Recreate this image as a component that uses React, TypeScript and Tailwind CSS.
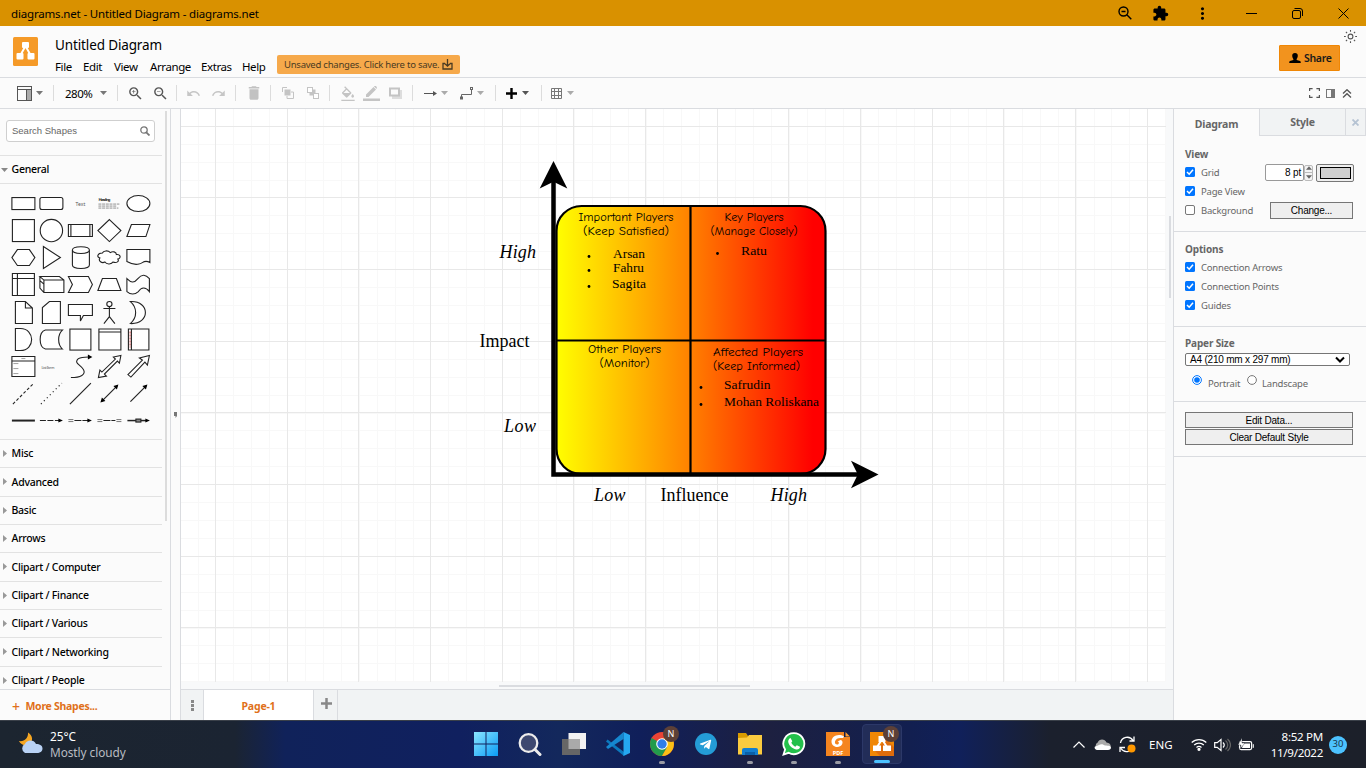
import React from "react";
import {
  MdExtension, MdMoreVert, MdZoomOut, MdZoomIn, MdUndo, MdRedo, MdDelete,
  MdFormatColorFill,
} from "react-icons/md";
import { FaTelegramPlane } from "react-icons/fa";

const Caret = ({ className = "text-[#777]" }: { className?: string }) => (
  <svg width="7" height="4" viewBox="0 0 7 4" className={className}>
    <path d="M0 0h7L3.5 4z" fill="currentColor" />
  </svg>
);

function TitleBar() {
  return (
    <div className="flex h-[26px] shrink-0 items-center bg-[#d99100] pl-[11px] text-black">
      <span className="w-[1107px] pt-px text-[11.5px] tracking-[-0.17px] leading-none">diagrams.net - Untitled Diagram - diagrams.net</span>
      <svg width="14" height="14" viewBox="0 0 14 14" fill="none" stroke="#000" strokeWidth="1.4">
        <circle cx="5.500" cy="5.500" r="4.500" /><path d="M3.500 5.500h4M8.800 8.800l4.500 4.500" />
      </svg>
      <MdExtension size={17} className="ml-[20px]" />
      <MdMoreVert size={19} className="ml-[24px]" />
      <svg width="11" height="11" viewBox="0 0 11 11" className="ml-[34px]"><path d="M0 5.5h11" stroke="#000" /></svg>
      <svg width="11" height="11" viewBox="0 0 11 11" fill="none" stroke="#000" className="ml-[35px]">
        <rect x=".5" y="2.5" width="8" height="8" rx="1.5" /><path d="M2.5.5h5.500a2.500 2.500 0 0 1 2.500 2.500v5" />
      </svg>
      <svg width="11" height="11" viewBox="0 0 11 11" stroke="#000" className="ml-[35px]"><path d="M.5.5l10 10M10.500.5l-10 10" /></svg>
    </div>
  );
}

function DrawioMark({ className }: { className: string }) {
  return (
    <svg viewBox="0 0 25 29" className={className}>
      <rect width="25" height="29" rx="1.500" fill="#f59a28" />
      <path d="M12.500 9L7.500 18M12.500 9l5 9" stroke="#fff" strokeWidth="2" />
      <rect x="9" y="5" width="7" height="6" rx="1" fill="#fff" />
      <rect x="3.500" y="16" width="7" height="6.500" rx="1" fill="#fff" />
      <rect x="14.500" y="16" width="7" height="6.500" rx="1" fill="#fff" />
    </svg>
  );
}

function Header() {
  return (
    <div className="flex h-[52px] shrink-0 border-b border-[#dadce0] bg-[#fbfbfb] pl-[13px]">
      <DrawioMark className="mt-[11px] h-[29px] w-[25px]" />
      <div className="ml-[17px] w-[222px] pt-[10px]">
        <div className="h-[18px] text-[13.5px] leading-[19px] tracking-[-0.13px] text-black">Untitled Diagram</div>
        <div className="flex pt-[4px] text-[11.5px] leading-[17px] tracking-[-0.4px] text-black">
          <span className="w-[28px]">File</span><span className="w-[31px]">Edit</span>
          <span className="w-[36px]">View</span><span className="w-[51px]">Arrange</span>
          <span className="w-[41px]">Extras</span><span>Help</span>
        </div>
      </div>
      <div className="mt-[29px] flex h-[19px] w-[183px] items-center rounded-[2px] bg-[#f6a94b] pl-[7px] text-[9.5px] tracking-[-0.23px] text-[#4a3a22]">
        <span className="w-[158px] whitespace-nowrap pt-[2px]">Unsaved changes. Click here to save.</span>
        <svg width="11" height="11" viewBox="0 0 11 11" fill="none" stroke="#4a3a22" strokeWidth="1.300">
          <path d="M3 4.500H1v5.500h9V4.500H8M5.500 0v7M3 4.800l2.500 2.400L8 4.800" />
        </svg>
      </div>
      <div className="ml-auto mt-[19px] flex h-[26px] w-[61px] items-center rounded-[1px] border border-[#f08705] bg-[#f2931e] pl-[9px] pt-[2px] text-[10.5px] tracking-[-0.3px] font-semibold text-[#1a1a1a]">
        <svg width="12" height="11" viewBox="0 0 13 12" className="mr-[3px] mt-[-1px]">
          <path d="M6.500 0a3 3 0 0 1 3 3.300c0 1.500-.8 2.800-1.200 3.200v1l3.700 1.300c.6.3.8 1 .8 2.200H.2c0-1.200.2-1.900.8-2.200l3.700-1.300v-1C4.300 6.100 3.500 4.800 3.500 3.300A3 3 0 0 1 6.500 0z" fill="#000" />
        </svg>
        Share
      </div>
      <div className="w-[26px] pl-[4px] pt-[4px]">
        <svg width="13" height="13" viewBox="0 0 13 13" fill="none" stroke="#555" strokeWidth="1.100">
          <circle cx="6.500" cy="6.500" r="2.400" />
          <path d="M6.500 0v1.800M6.500 11.200V13M0 6.500h1.800M11.200 6.500H13M1.900 1.900l1.200 1.200M9.900 9.900l1.200 1.200M1.900 11.100l1.200-1.200M9.900 3.100l1.200-1.200" />
        </svg>
      </div>
    </div>
  );
}

const Sep = () => <div className="h-[16px] w-px shrink-0 bg-[#dcdcdc]" />;

function Toolbar() {
  return (
    <div className="flex h-[31px] shrink-0 items-center border-b border-[#dadce0] bg-[#fbfbfb] text-[#555]">
      <div className="flex w-[53px] items-center gap-[4px] pl-[17px]">
        <svg width="15" height="15" viewBox="0 0 15 15" fill="none" stroke="#555"><rect x=".5" y=".5" width="14" height="14" /><path d="M.5 3.500h14M9.500 3.500v11" /><path d="M10 4h4v10h-4z" fill="#aaa" stroke="none" /></svg>
        <Caret />
      </div>
      <Sep />
      <div className="flex w-[63px] items-center pl-[11px] text-[11.5px] tracking-[-0.5px] text-black"><span className="w-[35px] pt-[2px]">280%</span><Caret /></div>
      <Sep />
      <div className="flex w-[58px] items-center gap-[8px] pl-[9px]"><MdZoomIn size={17} /><MdZoomOut size={17} /></div>
      <Sep />
      <div className="flex w-[58px] items-center gap-[10px] pl-[9px] text-[#c6c6c6]"><MdUndo size={15} /><MdRedo size={15} /></div>
      <Sep />
      <div className="flex w-[34px] justify-center pl-px text-[#c2c2c2]"><MdDelete size={18} /></div>
      <Sep />
      <div className="flex w-[58px] items-center gap-[13px] pl-[11px]">
        <svg width="12" height="12" viewBox="0 0 12 12"><path d="M.5 5V.5H5M7 11.500h4.500V7M5 9v2.500h2M9 5h2.500v2" fill="none" stroke="#c4c4c4" /><rect x="2.500" y="2.500" width="6" height="6" fill="#c4c4c4" /></svg>
        <svg width="12" height="12" viewBox="0 0 12 12" fill="#fff" stroke="#c4c4c4"><rect x="3" y="3" width="5" height="5" fill="#c4c4c4" /><rect x=".5" y=".5" width="5" height="5" /><rect x="6.500" y="6.500" width="5" height="5" /></svg>
      </div>
      <Sep />
      <div className="flex w-[82px] items-center pl-[10px] text-[#c4c4c4]">
        <MdFormatColorFill size={16} viewBox="0 0 24 20" />
        <svg width="17" height="15" viewBox="0 0 17 15" className="ml-[7px]" fill="#c4c4c4"><path d="M0 12.500h17V15H0zM3 11V8.500L10.500 1 13 3.500 5.500 11z" /><path d="M11 .5l.5-.5H13l1 1.500-.5 1.500z" /></svg>
        <svg width="13" height="12" viewBox="0 0 13 12" className="ml-[9px]"><path d="M3 3h10v9H3z" fill="#ddd" /><rect x="1" y="1.500" width="9" height="7" fill="#fbfbfb" stroke="#c4c4c4" strokeWidth="2" /></svg>
      </div>
      <Sep />
      <div className="flex w-[82px] items-center pl-[11px]">
        <svg width="13" height="8" viewBox="0 0 13 8"><path d="M0 4.500h12" stroke="#555" /><path d="M9 2L13 4.500 9 7z" fill="#555" /></svg>
        <Caret className="ml-[4px] text-[#aaa]" />
        <svg width="14" height="13" viewBox="0 0 14 13" fill="none" stroke="#666" className="ml-[12px]"><path d="M1.500 10V7.500h10V3" /><rect x=".5" y="10" width="2" height="2" /><rect x="10.500" y=".5" width="2" height="2" /></svg>
        <Caret className="ml-[3px] text-[#aaa]" />
      </div>
      <Sep />
      <div className="flex w-[45px] items-center gap-[5px] pl-[10px]">
        <svg width="11" height="11" viewBox="0 0 11 11"><path d="M5.500 0v11M0 5.500h11" stroke="#000" strokeWidth="2.400" /></svg><Caret className="text-[#555]" />
      </div>
      <Sep />
      <div className="flex items-center gap-[5px] pl-[8px]">
        <svg width="12" height="11" viewBox="0 0 12 11" fill="none" stroke="#777"><path d="M1.500.5h10v10h-10zM4.500.5v10M8.500.5v10M1.500 3.500h10M1.500 7.500h10" /></svg>
        <Caret className="text-[#aaa]" />
      </div>
      <div className="ml-auto flex items-center pr-[14px]">
        <svg width="11" height="10" viewBox="0 0 11 10" fill="none" stroke="#555" strokeWidth="1.200"><path d="M.6 3V.6h3M7.400.6h3V3M10.400 7v2.400h-3M3.600 9.400h-3V7" /></svg>
        <svg width="9" height="9" viewBox="0 0 9 9" className="ml-[6px]"><rect x=".5" y=".5" width="8" height="8" fill="none" stroke="#777" /><path d="M5 1h3v7H5z" fill="#777" /></svg>
        <svg width="10" height="9" viewBox="0 0 10 9" className="ml-[7px]" fill="none" stroke="#555" strokeWidth="1.300"><path d="M1 4.500l4-3.800 4 3.800M1 8.500l4-3.800 4 3.800" /></svg>
      </div>
    </div>
  );
}

const shapes: React.ReactNode[] = [
  <rect x="-11.500" y="-6" width="23" height="12" />,
  <rect x="-11.500" y="-6" width="23" height="12" rx="2" />,
  <text x="0" y="2" fontSize="5" textAnchor="middle" stroke="none" fill="#555">Text</text>,
  <g stroke="none" fill="#333"><text x="-11" y="-2.500" fontSize="4.200" fontWeight="700" textLength="12">Heading</text><g stroke="#777" strokeWidth=".8"><path d="M-11 .5H10M-11 2.500H7M-11 4.500H9" strokeDasharray="3 .7" /></g></g>,
  <ellipse rx="11.500" ry="8" />,
  <rect x="-11" y="-11" width="22" height="22" />,
  <circle r="11.200" />,
  <path d="M-12-6h24V6h-24zM-9.500-6V6M9.500-6V6" />,
  <path d="M0-11L11.500 0 0 11-11.500 0z" />,
  <path d="M-7-6h18.500L7.500 6h-19z" />,
  <path d="M-6-8H6l5.500 8L6 8H-6l-5.500-8z" />,
  <path d="M-8-11L9 0-8 11z" />,
  <path d="M-8-7.500v15c0 4.500 17 4.500 17 0v-15c0-4.500-17-4.500-17 0s17 4.500 17 0" />,
  <path d="M-7-4.500c-5 0-6 4-2.500 5-2 3 2 5.500 5 4 2 3 7 2 8 0 4 1.500 6.500-1 5-3 4-1.500 2-5-1.500-4.500 0-3-4-3.500-6-2-2.500-2.500-7-2-8 .5z" />,
  <path d="M-11.500-8h23V5c-6-3.500-7 1-11 1.500C-4 7.500-8 6-11.500 4z" />,
  <path d="M-11-11h22v22h-22zM-6-11v22M-11-6h22" />,
  <path d="M-11.500-4.500v8L-7.500 8h20V-4.500L8-8h-19.500L-7.500-4.500h20M-11.500-8v4l4 3.500M-7.500-4.500V8" />,
  <path d="M-12-8H8l4 8-4 8h-20l4-8z" />,
  <path d="M-7-6H7l4.500 12h-23z" />,
  <path d="M-11.500-6c4 4 7 5 11 0s8-4 11.500 0V7C7 2 3 2.500 0 7-4 10.500-8 10-11.500 7z" />,
  <path d="M-8-11H2l7 6.500V11H-8zM2-11v6.500h7" />,
  <path d="M-2-11H9v22H-9V-5z" />,
  <path d="M-12-8h24V3H3L0 8.500V3h-12z" />,
  <g><circle cy="-8.500" r="2.600" /><path d="M0-6v10M-6-4H6M0 4l-5.500 7M0 4l5.500 7" /></g>,
  <path d="M-8-11c20-1 20 23 0 22 7-6 7-16 0-22z" />,
  <path d="M-8-11h5c15 0 15 22 0 22h-5z" />,
  <path d="M-6-9.500h17C6-5 6 5 11 9.500H-6c-7-2-7-17 0-19z" />,
  <rect x="-10.500" y="-10.500" width="21" height="21" />,
  <path d="M-10.500-10.500h22v21h-22zM-10.500-7.500h22" />,
  <g><path d="M-10-10.500h20.500v21H-10zM-7-10.500v21" /><path d="M-8.300-8V8" stroke="#c55" strokeDasharray="2 1" /></g>,
  <g><path d="M-11.500-10h23v20h-23zM-11.500-5.500h23" /><path d="M-2-8h4M-10-3h5M-10 2h5M-10 7h5" strokeWidth=".7" stroke="#777" /></g>,
  <text x="-10" y="2" fontSize="4" textLength="13" stroke="none" fill="#555">List Item</text>,
  <g><path d="M-9.500 11C0 11 6 8 3 3S-6-3-3-7c2-2.500 5-2 11-2.500" /><path d="M7.500-12l4.500 2.500-4.500 2.500z" fill="#000" stroke="none" /></g>,
  <path d="M-11 11l1.500-7.500 2 2L6-7.500l-2-2 7.500-1.500L10-3.500l-2-2L-5 7.500l2 2z" />,
  <path d="M-10.500 8L4-6.500l-3-2L11-11 9-1.500 6.500-4.500-7.500 10.500z" />,
  <path d="M-10.500 10.500l21-21" strokeDasharray="3 2" />,
  <path d="M-10.500 10.500l21-21" strokeDasharray="1.200 3" />,
  <path d="M-10.500 10.500l21-21" />,
  <g><path d="M-8 8L8-8" /><path d="M-9 9l1.500-5 3.500 3.500zM9-9L7.500-4 4-7.500z" fill="#000" stroke="none" /></g>,
  <g><path d="M-8 8L8-8" /><path d="M9-9L7.500-4 4-7.500z" fill="#000" stroke="none" /></g>,
  <path d="M-11.500 0h23" strokeWidth="2" />,
  <g><path d="M-11.500 0H8" strokeDasharray="6 1.500" /><path d="M7-2l4.500 2L7 2z" fill="#000" stroke="none" /></g>,
  <g><path d="M-6 0H8" strokeDasharray="7 1" /><path d="M-12-1h5M-12 1h5" strokeWidth=".6" /><path d="M7-2l4.500 2L7 2z" fill="#000" stroke="none" /></g>,
  <g><path d="M-6 0H6" strokeDasharray="7 1" /><path d="M-12-1h5M-12 1h5M7-1h5M7 1h5" strokeWidth=".6" /></g>,
  <g><path d="M-11 0H8" strokeWidth="1.500" /><rect x="-2.500" y="-1.500" width="5" height="3" fill="#888" /><path d="M7-2l4.500 2L7 2z" fill="#000" stroke="none" /></g>,
];

const palettes = ["Misc", "Advanced", "Basic", "Arrows", "Clipart / Computer", "Clipart / Finance", "Clipart / Various", "Clipart / Networking", "Clipart / People"];

function Sidebar() {
  return (
    <div className="flex w-[171px] shrink-0 flex-col border-r border-[#dadce0] bg-[#fbfbfb]">
      <div className="flex min-h-0 flex-1 overflow-hidden">
        <div className="w-[162px]">
          <div className="h-[47px] border-b border-[#e2e2e2] pl-[6px] pt-[11px]">
            <div className="flex h-[22px] w-[149px] items-center justify-between rounded-[3px] border border-[#cfcfcf] bg-white pl-[5px] pr-[4px] font-['Liberation_Sans'] text-[9.5px] text-[#666]">
              <span>Search Shapes</span>
              <svg width="10" height="10" viewBox="0 0 10 10" fill="none" stroke="#777" strokeWidth="1.300"><circle cx="4" cy="4" r="3.200" /><path d="M6.300 6.300L9.500 9.500" strokeWidth="1.800" /></svg>
            </div>
          </div>
          <div className="flex h-[28px] items-center border-b border-[#e2e2e2] pl-[1px] text-[10.5px] tracking-[-0.25px] font-medium text-black">
            <Caret className="mr-[3.5px] text-[#888]" /><span className="pt-px">General</span>
          </div>
          <div className="grid h-[256px] grid-cols-[repeat(5,28.8px)] auto-rows-[27.15px] border-b border-[#e2e2e2] pl-[8.5px] pt-[6px]">
            {shapes.map((s, i) => (
              <svg key={i} width="28.8" height="27.15" viewBox="-14.400 -13.570 28.800 27.150" fill="#fff" stroke="#222" strokeWidth="1.100" className="overflow-visible">{s}</svg>
            ))}
          </div>
          {palettes.map((p) => (
            <div key={p} className="flex h-[28.33px] items-center border-b border-[#e2e2e2] pl-[3px] text-[10.5px] tracking-[-0.25px] font-medium text-black">
              <svg width="4" height="7" viewBox="0 0 4 7" className="mr-[4.5px]"><path d="M0 0l4 3.500L0 7z" fill="#999" /></svg>
              <span className="pt-px">{p}</span>
            </div>
          ))}
        </div>
        <div className="ml-[3px] mt-[2px] h-[410px] w-[2px] bg-[#dcdcdc]" />
      </div>
      <div className="flex h-[31px] items-center border-t border-[#dadce0] pl-[12px] pt-[3px] text-[10.5px] font-bold tracking-[-0.28px] text-[#e0701a]">
        <span className="w-[13.5px] text-[14px] font-medium leading-none">+</span><span>More Shapes...</span>
      </div>
    </div>
  );
}

const steps = (start: number, step: number, end: number) =>
  Array.from({ length: Math.ceil((end - start) / step) }, (_, i) => Math.round(start + i * step) + 0.5);

const hand = "'Comic Neue','Comic Sans MS','Noto Sans',sans-serif";

function Diagram() {
  const label = (x: number, y: number, t: string, w: number) => (
    <text key={t + x + y} x={x} y={y} textAnchor="middle" textLength={w} lengthAdjust="spacingAndGlyphs" fontSize="11" fontFamily={hand}>{t}</text>
  );
  const item = (bx: number, x: number, y: number, t: string, w: number) => (
    <g key={t}><circle cx={bx} cy={y - 1.5} r="1.400" /><text x={x} y={y} textLength={w} lengthAdjust="spacingAndGlyphs" fontSize="13.400" fontFamily="Liberation Serif, serif">{t}</text></g>
  );
  const axis = (x: number, y: number, t: string, w: number, italic = false) => (
    <text key={t + x} x={x} y={y} textLength={w} fontSize="18" fontStyle={italic ? "italic" : "normal"} fontFamily="Liberation Serif, serif">{t}</text>
  );
  return (
    <svg width="985" height="574" viewBox="181 109 985 574" className="block bg-white">
      <g stroke="#f8f8f8">
        {steps(197.500, 17.920, 1166).map((x) => <path key={x} d={`M${x} 109v574`} />)}
        {steps(125.800, 17.920, 683).map((y) => <path key={y} d={`M181 ${y}h985`} />)}
      </g>
      <g stroke="#e8e8e8">
        {steps(215, 71.680, 1166).map((x) => <path key={x} d={`M${x} 109v574`} />)}
        {steps(125.500, 71.680, 683).map((y) => <path key={y} d={`M181 ${y}h985`} />)}
      </g>
      <defs>
        <linearGradient id="heat"><stop offset="0" stopColor="#ff0" /><stop offset="1" stopColor="#ff8000" /></linearGradient>
        <linearGradient id="hot"><stop offset="0" stopColor="#ff8000" /><stop offset=".9" stopColor="#f00" /></linearGradient>
        <clipPath id="card"><rect x="556" y="206" width="270" height="268" rx="25" /></clipPath>
      </defs>
      <g clipPath="url(#card)"><rect x="556" y="206" width="135" height="268" fill="url(#heat)" /><rect x="690.500" y="206" width="136" height="268" fill="url(#hot)" /></g>
      <rect x="556.500" y="206" width="269" height="268" rx="25" fill="none" stroke="#000" strokeWidth="2.200" />
      <path d="M690.500 206v268M556 340.500h270" stroke="#000" strokeWidth="2.200" />
      <path d="M553.500 180v294.500H860" fill="none" stroke="#000" strokeWidth="4.500" />
      <path d="M553.500 161l13.800 27.500-13.800-6.800-13.800 6.800zM878.500 474.500l-27.500 13.800 6.800-13.800-6.800-13.800z" />
      {label(626, 221, "Important Players", 95)}{label(626, 235, "(Keep Satisfied)", 86)}
      {label(754, 221, "Key Players", 59)}{label(754, 235, "(Manage Closely)", 87)}
      {label(624.500, 353, "Other Players", 73)}{label(624.500, 367, "(Monitor)", 50)}
      {label(758, 356, "Affected Players", 90)}{label(756.500, 370, "(Keep Informed)", 87)}
      {item(589, 613, 258, "Arsan", 32)}{item(589, 613, 272, "Fahru", 31)}{item(589, 612, 288, "Sagita", 34)}
      {item(717.500, 741, 255, "Ratu", 26)}
      {item(701, 724, 389, "Safrudin", 46.500)}{item(701, 724, 406, "Mohan Roliskana", 95)}
      {axis(499.500, 258, "High", 36.500, true)}{axis(479.500, 347, "Impact", 50)}{axis(504, 432, "Low", 32, true)}
      {axis(594, 501, "Low", 31.500, true)}{axis(660.500, 501, "Influence", 68)}{axis(770.500, 501, "High", 36.500, true)}
    </svg>
  );
}

function Canvas() {
  return (
    <div className="flex min-w-0 flex-1 flex-col border-l border-[#dadce0] bg-[#f8f9fa]">
      <div className="flex h-[573px] overflow-hidden">
        <Diagram />
        <div className="ml-[3px] mt-[107px] h-[82px] w-[2px] bg-[#dadce0]" />
      </div>
      <div className="h-[7px] pl-[318px] pt-[3px]"><div className="h-[2px] w-[251px] bg-[#dadce0]" /></div>
      <div className="flex h-[31px] border-t border-[#dadce0] bg-[#f1f3f4]">
        <div className="flex w-[23px] items-center justify-center border-r border-[#dadce0]">
          <svg width="3" height="11" fill="#888"><path d="M0 0h3v3H0zM0 4h3v3H0zM0 8h3v3H0z" /></svg>
        </div>
        <div className="flex w-[110px] items-center justify-center border-r border-[#dadce0] bg-white pt-[3px] text-[10.5px] tracking-[-0.2px] font-bold text-[#e0701a]">Page-1</div>
        <div className="flex w-[24px] justify-center border-r border-[#dadce0] pl-[2px] pt-[8px]">
          <svg width="11" height="11"><path d="M5.500 0v11M0 5.500h11" stroke="#888" strokeWidth="2.500" /></svg>
        </div>
      </div>
    </div>
  );
}

const Check = ({ on = true }: { on?: boolean }) => (
  <svg width="10" height="10" viewBox="0 0 10 10" className="mr-[6px] mt-[-2px]">
    {on ? <><rect width="10" height="10" rx="1.500" fill="#0075ff" /><path d="M2 5l2.200 2.200L8 2.800" fill="none" stroke="#fff" strokeWidth="1.500" /></> : <rect x=".5" y=".5" width="9" height="9" rx="1.500" fill="#fff" stroke="#777" />}
  </svg>
);
const Row = ({ on, children }: { on?: boolean; children: React.ReactNode }) => (
  <div className="flex h-[19px] items-center"><Check on={on} /><span className="pt-[2px]">{children}</span></div>
);
const Heading = ({ children }: { children: React.ReactNode }) => <div className="h-[19px] text-[10px] tracking-[-0.15px] font-bold leading-[21px]">{children}</div>;
const PlainButton = ({ className, children }: { className: string; children: React.ReactNode }) => (
  <div className={`flex items-center justify-center border border-[#767676] bg-[#efefef] pt-px font-['Liberation_Sans'] text-[10px] leading-none tracking-[-0.22px] text-black ${className}`}>{children}</div>
);

function FormatPanel() {
  return (
    <div className="w-[193px] shrink-0 border-l border-[#dadce0] bg-[#fbfbfb] text-[9.5px] tracking-[-0.2px] text-[#666]">
      <div className="flex h-[27px] text-[10.5px] font-bold">
        <div className="flex w-[85px] items-center justify-center pt-[4px]">Diagram</div>
        <div className="flex w-[86px] items-center justify-center border-b border-l border-[#dadce0] bg-[#f1f3f4] pt-px">Style</div>
        <div className="flex flex-1 items-center border-b border-l border-r border-[#dadce0] bg-[#f1f3f4] pl-[6px]">
          <svg width="7" height="7"><path d="M.5.5l6 6M6.500.5l-6 6" stroke="#b5c3d3" strokeWidth="1.800" /></svg>
        </div>
      </div>
      <div className="h-[96px] border-b border-[#dadce0] pl-[11px] pt-[8px]">
        <Heading>View</Heading>
        <div className="flex h-[19px] items-center">
          <Check /><span className="w-[64px] pt-[2px]">Grid</span>
          <div className="flex h-[17px] w-[39px] items-center justify-end rounded-[2px] border border-[#999] bg-white pr-[2px] font-['Liberation_Sans'] text-[10px] text-black">8 pt</div>
          <div className="flex h-[16px] w-[9px] flex-col items-center justify-around rounded-[2px] border border-[#bbb] bg-[#f4f4f4] px-[1px]">
            <Caret className="w-[6px] rotate-180" /><div className="h-px w-[7px] bg-[#bbb]" /><Caret className="w-[6px]" />
          </div>
          <div className="ml-[3px] flex h-[18px] w-[38px] items-center justify-center rounded-[2px] border border-[#777] bg-[#efefef]"><div className="h-[12px] w-[31px] border border-black bg-[#d0d0d0]" /></div>
        </div>
        <Row>Page View</Row>
        <div className="flex h-[19px] items-center"><Check on={false} /><span className="w-[69px] pt-[2px]">Background</span><PlainButton className="h-[17px] w-[83px]">Change...</PlainButton></div>
      </div>
      <div className="h-[95px] border-b border-[#dadce0] pl-[11px] pt-[7px]">
        <Heading>Options</Heading><Row>Connection Arrows</Row><Row>Connection Points</Row><Row>Guides</Row>
      </div>
      <div className="h-[75px] border-b border-[#dadce0] pl-[11px] pt-[6px]">
        <Heading>Paper Size</Heading>
        <div className="mt-[1px] flex h-[13px] w-[165px] items-center justify-between rounded-[2px] border border-[#767676] bg-white pl-[4px] pr-[4px] font-['Liberation_Sans'] text-[10px] leading-none text-black">
          A4 (210 mm x 297 mm)
          <svg width="10" height="7"><path d="M1 1.500l4 4 4-4" fill="none" stroke="#000" strokeWidth="2" /></svg>
        </div>
        <div className="flex items-start pl-[7px] pt-[9px] leading-[17px]">
          <svg width="10" height="10"><circle cx="5" cy="5" r="4.400" fill="#fff" stroke="#0075ff" /><circle cx="5" cy="5" r="2.800" fill="#0075ff" /></svg>
          <span className="w-[45px] pl-[6px]">Portrait</span>
          <svg width="10" height="10"><circle cx="5" cy="5" r="4.400" fill="#fff" stroke="#777" /></svg>
          <span className="pl-[5px]">Landscape</span>
        </div>
      </div>
      <div className="flex h-[55px] flex-col gap-[1px] border-b border-[#dadce0] pl-[11px] pt-[10px]">
        <PlainButton className="h-[16px] w-[168px]">Edit Data...</PlainButton>
        <PlainButton className="h-[16px] w-[168px]">Clear Default Style</PlainButton>
      </div>
    </div>
  );
}

const NBadge = () => <div className="absolute -right-[5px] -top-[6px] flex size-[16px] items-center justify-center rounded-full bg-[#5d4037] text-[9px] text-white">N</div>;

const taskIcons: { icon: React.ReactNode; badge?: boolean; bar?: string; active?: boolean }[] = [
  { icon: <svg width="24" height="24"><defs><linearGradient id="win" x2="1" y2="1"><stop stopColor="#8be6ff" /><stop offset="1" stopColor="#0a9bf5" /></linearGradient></defs><path d="M0 0h11.500v11.500H0zM12.500 0H24v11.500H12.500zM0 12.500h11.500V24H0zM12.500 12.500H24V24H12.500z" fill="url(#win)" /></svg> },
  { icon: <svg width="24" height="24" fill="none" stroke="#ececec"><circle cx="10.500" cy="11" r="8.800" strokeWidth="2.300" fill="#3d4870" /><path d="M17 17.500l5 5" strokeWidth="3" strokeLinecap="round" /></svg> },
  { icon: <svg width="24" height="24"><rect x="6.500" y="1" width="17.500" height="16" fill="#f2f2f2" /><rect x="0" y="7" width="18" height="16" fill="#666" /><path d="M6.500 7H18v10H6.500z" fill="#aaa" /></svg> },
  { icon: <svg width="24" height="24"><path d="M1.500 7.500L18 20v4L0 9.500z" fill="#0b78bd" /><path d="M0 15L17.500 0v7L2 17z" fill="#1687cf" /><path d="M17.500 0L24 3v18l-6.500 3z" fill="#25a7f0" /></svg> },
  { icon: <svg width="24" height="24" viewBox="-12 -12 24 24"><circle r="12" fill="#ea4335" /><path d="M0 0L-10.390-6A12 12 0 0 0 0 12L5.200 3z" fill="#229b4c" /><path d="M0-5.500h10.600A12 12 0 0 1 0 12l5.200-9z" fill="#fbc116" /><circle r="5.800" fill="#fff" /><circle r="4.700" fill="#2f7de9" /></svg>, badge: true, bar: "h-[3px] w-[6px] bg-[#9a9ba4]" },
  { icon: <div className="flex size-[22px] items-center justify-center rounded-full bg-[#249cd6] pr-[1px] text-white"><FaTelegramPlane size={13} /></div> },
  { icon: <svg width="24" height="24"><path d="M0 1h8l2 3v5H0z" fill="#d99b00" /><path d="M0 6l9-.5L11 3h13v19.500H0z" fill="#fbcb3f" /><path d="M4 23v-5a2 2 0 0 1 2-2h12a2 2 0 0 1 2 2v5z" fill="#137ed0" /><path d="M7 20h10v3H7z" fill="#0a5fa8" /></svg>, bar: "h-[3px] w-[6px] bg-[#9a9ba4]" },
  { icon: <svg width="24" height="24"><path d="M12 1.200a10.500 10.500 0 1 1-5.400 19.600L1.500 22.500l1.600-5A10.500 10.500 0 0 1 12 1.200z" fill="#23c04b" stroke="#fff" strokeWidth="1.800" /><path d="M8.500 6l1.800 3.300-1 1.500c1 2 2.200 3 4 3.900l1.500-1.500 3.200 1.600c0 2-2 3-3.800 2.600-4.500-1-7.500-4-8-7.700 0-1.500.9-3.400 2.300-3.700z" fill="#fff" /></svg>, bar: "h-[3px] w-[6px] bg-[#9a9ba4]" },
  { icon: <svg width="24" height="24"><path d="M0 0h18v5h6v19H0z" fill="#f5851f" /><path d="M19.500 0L24 4.500h-4.500z" fill="#ff9b30" /><path d="M18 4.500C12 1 5.500 4.500 5.500 9.500c0 4.500 5 7 9 4.500 3-2 2.500-5.500 0-6l-3 1.500c1.500 0 2 2 .5 3-2 .5-3.500-1-3-3 .7-3 4-4 6.500-3.500 1.500.3 2.500-.5 2.500-1.500z" fill="#fff" /><text x="12" y="22.500" textAnchor="middle" fill="#fff" fontSize="5.500" fontWeight="700">PDF</text></svg>, bar: "h-[3px] w-[6px] bg-[#9a9ba4]" },
  { icon: <svg width="24" height="24"><path d="M0 0h24v24H0z" fill="#f08705" /><path d="M16 7l8 8v9H10l-5-5z" fill="#df6c0c" /><path d="M11.500 8L6.500 16M12.500 8l5 8" stroke="#fff" strokeWidth="2" /><path d="M8.500 4h7v6h-7zM3 13.500h8v5.500H3zM13 13.500h8v5.500h-8z" fill="#fff" /></svg>, badge: true, bar: "h-[3px] w-[16px] bg-[#4cc2ff]", active: true },
];

function Taskbar() {
  return (
    <div className="flex h-[48px] shrink-0 border-t border-[#3a4049] bg-[linear-gradient(90deg,#1c2530_0px,#1b2432_235px,#10225a_285px,#10205f_460px,#13285c_560px,#101f5a_640px,#1d2040_770px,#121f50_910px,#10205a_960px,#1b202d_1050px,#1c202a_1366px)] text-[12px] text-white">
      <div className="flex w-[464px] pl-[18px] pt-[7px]">
        <svg width="26" height="30" viewBox="0 0 26 30" className="mr-[6px]">
          <path d="M10 4.500c5 3 5.500 9 1 12-4 2-8.500 0-10-3.500C6 14 10.500 10 10 4.500z" fill="#f5a623" />
          <path d="M7 25a5 5 0 0 1 0-9c1.500-4.500 9-5 11 0 4 0 6.500 1.500 6.500 4.500S22 25 19 25z" fill="#b9d2f5" />
        </svg>
        <div className="text-[11.8px] leading-[16px] tracking-[-0.05px]"><div>25°C</div><div className="text-[#b9bcc2]">Mostly cloudy</div></div>
      </div>
      {taskIcons.map((t, i) => (
        <div key={i} className="flex w-[44px] justify-center pt-[3px]">
          <div className={t.active ? "relative flex h-[40px] w-[40px] justify-center rounded-[4px] border border-[#2c3868] bg-[#222d58] pt-[7px]" : "relative flex h-[40px] w-[40px] justify-center pt-[8px]"}>
            <div className="relative flex size-[24px] items-center justify-center">{t.icon}{t.badge && <NBadge />}</div>
            {t.bar && <div className={`absolute bottom-0 rounded-full ${t.bar}`} />}
          </div>
        </div>
      ))}
      <div className="ml-[169px] flex flex-1 items-center">
        <svg width="12" height="7" fill="none" stroke="#fff" strokeWidth="1.200"><path d="M.5 6.500L6 1l5.500 5.500" /></svg>
        <svg width="17" height="11" viewBox="0 0 17 11" className="ml-[9px]"><path d="M4 10a3.500 3.500 0 0 1-.3-6.500C5-.5 11-.5 12.500 3.500 18 4 18 10 13.500 10z" fill="#aaa" /><path d="M4 11C1 11 0 9 1 7.500c3 0 5-3 8-2 2 2 7 0 8 3 0 1.500-1 2.500-3 2.500z" fill="#fff" /></svg>
        <svg width="17" height="17" viewBox="0 0 17 17" className="ml-[8px]" fill="none" stroke="#fff" strokeWidth="1.300"><path d="M1.500 7A6.800 6.800 0 0 1 14 4.500M15 .5v4.500h-4.500M14.500 9A6.800 6.800 0 0 1 2 12.500M1 16v-4.500h5" /><circle cx="12.500" cy="12.500" r="4" fill="#ff9800" stroke="none" /></svg>
        <span className="ml-[13px] w-[42px] pt-px text-[11.5px]">ENG</span>
        <svg width="16" height="13" viewBox="0 0 16 13" fill="none" stroke="#fff" strokeWidth="1.300"><path d="M.7 4.500a10.500 10.500 0 0 1 14.600 0M3.200 7a7 7 0 0 1 9.600 0M5.500 9.400a3.800 3.800 0 0 1 5 0" /><circle cx="8" cy="11.300" r="1" fill="#fff" /></svg>
        <svg width="17" height="14" viewBox="0 0 17 14" className="ml-[7px]" fill="none" stroke="#fff" strokeWidth="1.200"><path d="M.7 4.700h2.500L7 1.500v11L3.200 9.300H.7zM9 4.500c1.500 1.500 1.500 3.500 0 5" /><path d="M11.500 2.500c3 2.500 3 6.500 0 9M13.500 1c4 3.500 4 8.500 0 12" stroke="#666" /></svg>
        <svg width="17" height="13" viewBox="0 0 17 13" className="ml-[7px]"><rect x="1.600" y="3.600" width="12" height="8" rx="1.500" fill="none" stroke="#fff" strokeWidth="1.300" /><path d="M5 5.500h7v4.500H4z" fill="#fff" /><path d="M14.500 6H16v4h-1.500zM4 0L0 7h3l-1 4 5-6H4z" fill="#fff" stroke="#1b202b" strokeWidth=".4" /></svg>
        <div className="ml-auto w-[56px] whitespace-nowrap text-right text-[11.6px] leading-[16px] tracking-[-0.3px]">8:52 PM<br />11/9/2022</div>
        <div className="ml-[6px] mr-[19px] flex size-[18px] items-center justify-center rounded-full bg-[#4cc2ff] text-[9.5px] text-[#16324a]">30</div>
      </div>
    </div>
  );
}

export default function App() {
  return (
    <div className="flex h-[768px] w-[1366px] flex-col overflow-hidden bg-[#fbfbfb] font-['Noto_Sans',sans-serif]">
      <TitleBar />
      <Header />
      <Toolbar />
      <div className="flex h-[611px] shrink-0">
        <Sidebar />
        <div className="flex w-[9px] items-center justify-center bg-[#fbfbfb]"><svg width="3" height="6"><path d="M0 0h3v4L1.500 6V4H0z" fill="#777" /></svg></div>
        <Canvas />
        <FormatPanel />
      </div>
      <Taskbar />
    </div>
  );
}
